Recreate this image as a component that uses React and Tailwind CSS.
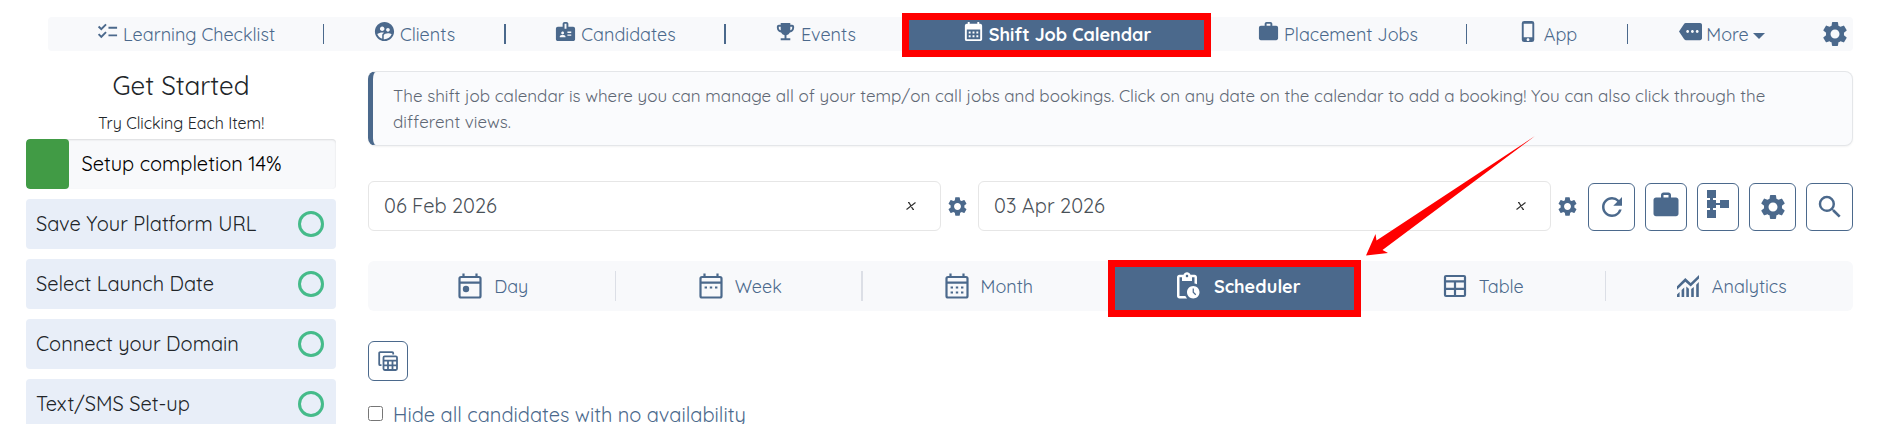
import React from "react";
import {
  MdBadge,
  MdCalendarMonth,
  MdChecklist,
  MdEmojiEvents,
  MdMore,
  MdOutlinePendingActions,
  MdPhoneIphone,
  MdRefresh,
  MdSearch,
  MdSettings,
  MdSupervisedUserCircle,
  MdWork,
} from "react-icons/md";

const navItems = [
  { label: "Learning Checklist", icon: MdChecklist, divider: "border-r" },
  { label: "Clients", icon: MdSupervisedUserCircle, divider: "border-r-2" },
  { label: "Candidates", icon: MdBadge, divider: "border-r-2" },
  { label: "Events", icon: MdEmojiEvents, divider: "" },
  { label: "Shift Job Calendar", icon: MdCalendarMonth, divider: "", active: true },
  { label: "Placement Jobs", icon: MdWork, divider: "border-r" },
  { label: "App", icon: MdPhoneIphone, divider: "border-r" },
  { label: "More", icon: MdMore, divider: "", caret: true },
];

const setupSteps = ["Save Your Platform URL", "Select Launch Date", "Connect your Domain", "Text/SMS Set-up"];

function CalendarIcon({ children }) {
  return (
    <svg className="w-6 h-[26px]" viewBox="0 0 24 26" fill="none">
      <rect x="1.5" y="4" width="21" height="20.5" rx="1.5" stroke="currentColor" strokeWidth="2.2" />
      <path d="M1.5 9.6h21M5.5 0.5v4M18.5 0.5v4" stroke="currentColor" strokeWidth="2.2" />
      {children}
    </svg>
  );
}

function DayIcon() {
  return (
    <CalendarIcon>
      <circle cx="8" cy="16" r="3.2" fill="currentColor" />
    </CalendarIcon>
  );
}

function WeekIcon() {
  return (
    <CalendarIcon>
      <path d="M5.6 14.5h2.4M10.8 14.5h2.4M16 14.5h2.4" stroke="currentColor" strokeWidth="2.2" />
    </CalendarIcon>
  );
}

function MonthIcon() {
  return (
    <CalendarIcon>
      <path
        d="M5.6 14.5h2.4M10.8 14.5h2.4M16 14.5h2.4M5.6 19.5h2.4M10.8 19.5h2.4M16 19.5h2.4"
        stroke="currentColor"
        strokeWidth="2.2"
      />
    </CalendarIcon>
  );
}

function TableIcon() {
  return (
    <svg className="w-6 h-6" viewBox="0 0 24 24" fill="none" stroke="currentColor" strokeWidth="2.2">
      <rect x="2" y="2" width="20" height="20" rx="1" />
      <path d="M2 7.3h20M2 14.8h20M12 7.3V22" />
    </svg>
  );
}

function AnalyticsIcon() {
  return (
    <svg className="w-6 h-6" viewBox="0 0 24 24" fill="currentColor">
      <path d="M1 12.2 9.3 4l5.4 5L23 1v3.6l-8.3 8L9.3 7.7 1 15.8z" />
      <path d="M1 20.5 3.6 18v5H1zM5.6 16l2.6-2.5V23H5.6zM10.3 12.5l2.6 2.2V23h-2.6zM15.2 15l2.6-2V23h-2.6zM20.2 10.7 22.8 8v15h-2.6z" />
    </svg>
  );
}

function TreeIcon() {
  return (
    <svg className="w-[22px] h-7" viewBox="0 0 22 28" fill="currentColor">
      <path d="M0 0h9v8H6v2h3v3h4v-3h9v8h-9v-3H9v3H6v2h3v8H0v-8h3v-2H0v-8h3V8H0z" />
    </svg>
  );
}

function CopyTableIcon() {
  return (
    <svg className="w-5 h-5" viewBox="0 0 20 20" fill="none" stroke="currentColor" strokeWidth="1.8">
      <path d="M3.5 14.2H2.2a1 1 0 0 1-1-1V2.2a1 1 0 0 1 1-1h12a1 1 0 0 1 1 1v1.3" />
      <rect x="5.5" y="5.3" width="13.5" height="13.7" rx="1.2" />
      <path d="M5.5 9.7h13.5M5.5 14.3h13.5M10 9.7V19M14.5 9.7V19" />
    </svg>
  );
}

const views = [
  { label: "Day", icon: DayIcon, divider: "border-r" },
  { label: "Week", icon: WeekIcon, divider: "border-r-2" },
  { label: "Month", icon: MonthIcon, divider: "" },
  { label: "Scheduler", icon: MdOutlinePendingActions, divider: "", active: true },
  { label: "Table", icon: TableIcon, divider: "border-r" },
  { label: "Analytics", icon: AnalyticsIcon, divider: "" },
];

function NavBar() {
  return (
    <nav className="mx-12 h-[34px] rounded bg-[#f8f9fb] grid grid-cols-[276fr_182fr_220fr_178fr_305fr_258fr_161fr_188fr_37fr] items-center text-[#4b698c]">
      {navItems.map(({ label, icon: Icon, divider, active, caret }) => (
        <div
          key={label}
          className={active ? "relative h-[34px] flex items-center bg-[#4b698c] text-white font-bold" : `h-5 flex items-center border-[#4b698c] ${divider}`}
        >
          <a href="#" className="w-full flex items-center justify-center gap-1 whitespace-nowrap text-lg leading-5">
            <Icon className="w-[23px] h-[23px] mb-1.5" />
            <span className="pt-0.5">{label}</span>
            {caret && <span className="mt-1 border-x-[6px] border-x-transparent border-t-[6px] border-t-[#4b698c]" />}
          </a>
          {active && <span className="absolute -inset-x-0.5 -top-1 -bottom-1.5 border-[7px] border-[#ff0000] pointer-events-none" />}
        </div>
      ))}
      <button type="button" aria-label="Settings" className="flex justify-center">
        <MdSettings className="w-[30px] h-[30px]" />
      </button>
    </nav>
  );
}

function GetStarted() {
  return (
    <aside className="w-[310px] shrink-0 text-[#212529]">
      <h2 className="text-center text-[26px] leading-[30px]">Get Started</h2>
      <p className="mt-2 mb-0.5 text-center text-base leading-7">Try Clicking Each Item!</p>
      <div className="h-[50px] rounded bg-[#f8f9fb] shadow-[inset_0_1px_2px_rgba(0,0,0,0.12)] flex items-center overflow-hidden">
        <div className="h-full rounded bg-[#419b45]" style={{ width: "14%" }} />
        <span className="ml-3 text-xl text-black">Setup completion 14%</span>
      </div>
      <ul className="mt-2.5 flex flex-col gap-2.5">
        {setupSteps.map((step) => (
          <li key={step}>
            <a href="#" className="h-[50px] rounded bg-[#e8eef8] pl-2.5 pr-3 flex items-center justify-between text-xl">
              {step}
              <span className="w-[26px] h-[26px] rounded-full border-[3px] border-[#45bb8a]" />
            </a>
          </li>
        ))}
      </ul>
    </aside>
  );
}

function DateField({ label, value }) {
  return (
    <div className="flex-1 flex items-center">
      <div className="flex-1 h-[50px] flex items-center rounded-md border border-[#e6e6e6] pl-[15px] pr-6">
        <input type="text" aria-label={label} defaultValue={value} className="flex-1 min-w-0 h-full pb-0.5 text-xl text-[#495057] outline-none" />
        <button type="button" aria-label={`Clear ${label}`} className="text-[#333333]">
          <svg className="w-2.5 h-2" viewBox="0 0 10 8" fill="none" stroke="currentColor" strokeWidth="1.2">
            <path d="M2 0.6h1l4 6.8h1M9.500 0.600 0.500 7.400" />
          </svg>
        </button>
      </div>
      <button type="button" aria-label={`${label} settings`} className="w-8 flex justify-center text-[#4b698c]">
        <MdSettings className="w-[23px] h-[23px]" />
      </button>
    </div>
  );
}

function ToolButton({ label, className, children }) {
  return (
    <button
      type="button"
      aria-label={label}
      className={`h-12 rounded-md border border-[#4b698c] text-[#4b698c] flex justify-center ${className}`}
    >
      {children}
    </button>
  );
}

function Toolbar() {
  return (
    <div className="mt-[35px] flex items-center gap-[5px]">
      <DateField label="Start date" value="06 Feb 2026" />
      <DateField label="End date" value="03 Apr 2026" />
      <div className="mt-0.5 flex gap-2.5">
        <ToolButton label="Refresh" className="w-[47px] items-center">
          <MdRefresh className="w-[30px] h-[30px]" />
        </ToolButton>
        <ToolButton label="Jobs" className="w-[42px] items-start pt-1.5">
          <MdWork className="w-[30px] h-[30px]" />
        </ToolButton>
        <ToolButton label="Tree" className="w-[42px] items-start pt-1.5">
          <TreeIcon />
        </ToolButton>
        <ToolButton label="Options" className="w-[47px] items-center">
          <MdSettings className="w-[30px] h-[30px]" />
        </ToolButton>
        <ToolButton label="Search" className="w-[47px] items-center">
          <MdSearch className="w-[30px] h-[30px]" />
        </ToolButton>
      </div>
    </div>
  );
}

function ViewTabs() {
  return (
    <div className="relative mt-[30px] h-[50px] rounded-md bg-[#f8f9fb] grid grid-cols-6 items-center text-[#4b698c]">
      {views.map(({ label, icon: Icon, divider, active }) => (
        <div
          key={label}
          className={active ? "relative h-[50px] bg-[#4b698c] text-white font-bold" : `h-[30px] border-[#dcdfe6] ${divider}`}
        >
          <button type="button" className="w-full h-full pl-1 flex items-center justify-center gap-3 text-lg">
            {active ? <Icon className="w-[30px] h-[30px]" /> : <Icon />}
            <span className="pt-0.5">{label}</span>
          </button>
          {active && <span className="absolute -inset-x-[3px] -top-px -bottom-1.5 border-[7px] border-[#ff0000] pointer-events-none" />}
        </div>
      ))}
      {/* pointer towards the scheduler tab */}
      <svg className="absolute left-2/3 ml-2 -top-[126px] w-[172px] h-[122px] pointer-events-none" viewBox="0 0 172 122" fill="#ff0000">
        <path d="M169 1 10.5 105.5 9.5 99 0 120.5 22 118 16.5 115z" />
      </svg>
    </div>
  );
}

export default function App() {
  return (
    <div className="h-screen overflow-hidden bg-white pt-[17px] font-['Quicksand','Lato',sans-serif]">
      <NavBar />
      <div className="mt-5 pl-[26px] pr-12 flex gap-8">
        <GetStarted />
        <main className="flex-1 min-w-0">
          <p className="rounded-lg border border-l-[5px] border-[#e4e6e9] border-l-[#4b698c] bg-[#fafbfd] shadow-xs px-5 pt-[11px] pb-2.5 text-[17px] leading-[26px] text-[#5f6875]">
            The shift job calendar is where you can manage all of your temp/on call jobs and bookings. Click on any date on the
            calendar to add a booking! You can also click through the different views.
          </p>
          <Toolbar />
          <ViewTabs />
          <button
            type="button"
            aria-label="Copy table"
            className="mt-[30px] w-10 h-10 rounded-md border border-[#4b698c] text-[#4b698c] flex items-center justify-center"
          >
            <CopyTableIcon />
          </button>
          <label className="mt-5 flex items-start gap-2.5 text-xl leading-7 text-[#4b698c]">
            <input type="checkbox" className="mt-[5px] w-[15px] h-[15px]" />
            Hide all candidates with no availability
          </label>
        </main>
      </div>
    </div>
  );
}
